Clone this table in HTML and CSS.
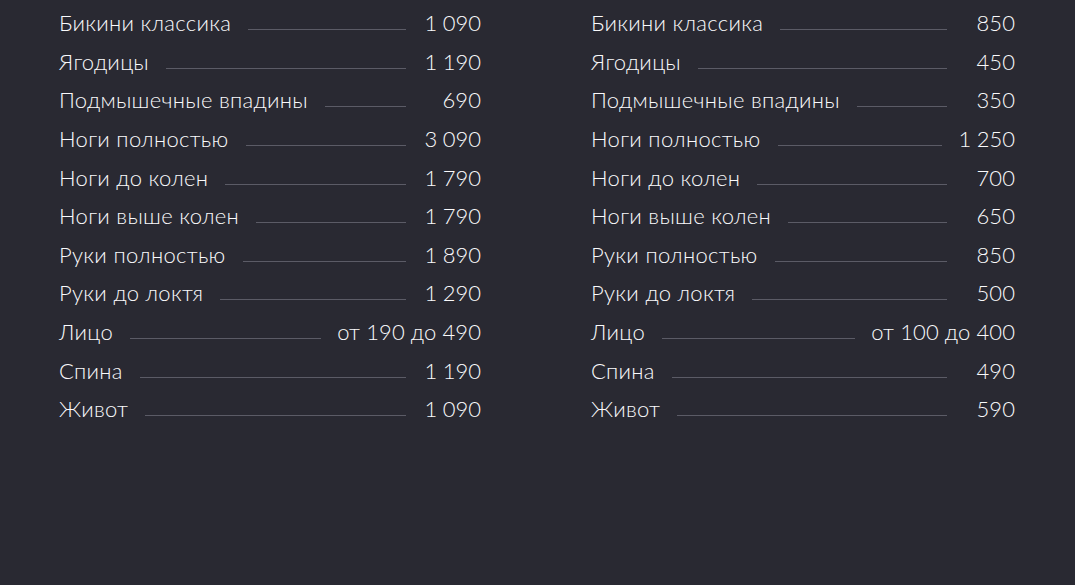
FILE: index.html
```html
<!DOCTYPE html>
<html lang="ru">
<head>
  <meta charset="UTF-8" />
  <meta name="viewport" content="width=device-width, initial-scale=1" />
  <title>Цены на эпиляцию</title>
  <link rel="stylesheet" href="styles.css">
</head>
<body>
  <div class="prices">
    <ul class="price-list price-list--left">
      <li class="price-row"><span class="name">Бикини классика</span><span class="dots"></span><span class="cost">1&#8239;090</span></li>
      <li class="price-row"><span class="name">Ягодицы</span><span class="dots"></span><span class="cost">1&#8239;190</span></li>
      <li class="price-row"><span class="name">Подмышечные впадины</span><span class="dots"></span><span class="cost">690</span></li>
      <li class="price-row"><span class="name">Ноги полностью</span><span class="dots"></span><span class="cost">3&#8239;090</span></li>
      <li class="price-row"><span class="name">Ноги до колен</span><span class="dots"></span><span class="cost">1&#8239;790</span></li>
      <li class="price-row"><span class="name">Ноги выше колен</span><span class="dots"></span><span class="cost">1&#8239;790</span></li>
      <li class="price-row"><span class="name">Руки полностью</span><span class="dots"></span><span class="cost">1&#8239;890</span></li>
      <li class="price-row"><span class="name">Руки до локтя</span><span class="dots"></span><span class="cost">1&#8239;290</span></li>
      <li class="price-row"><span class="name">Лицо</span><span class="dots"></span><span class="cost">от 190 до 490</span></li>
      <li class="price-row"><span class="name">Спина</span><span class="dots"></span><span class="cost">1&#8239;190</span></li>
      <li class="price-row"><span class="name">Живот</span><span class="dots"></span><span class="cost">1&#8239;090</span></li>
    </ul>

    <ul class="price-list price-list--right">
      <li class="price-row"><span class="name">Бикини классика</span><span class="dots"></span><span class="cost">850</span></li>
      <li class="price-row"><span class="name">Ягодицы</span><span class="dots"></span><span class="cost">450</span></li>
      <li class="price-row"><span class="name">Подмышечные впадины</span><span class="dots"></span><span class="cost">350</span></li>
      <li class="price-row"><span class="name">Ноги полностью</span><span class="dots"></span><span class="cost">1&#8239;250</span></li>
      <li class="price-row"><span class="name">Ноги до колен</span><span class="dots"></span><span class="cost">700</span></li>
      <li class="price-row"><span class="name">Ноги выше колен</span><span class="dots"></span><span class="cost">650</span></li>
      <li class="price-row"><span class="name">Руки полностью</span><span class="dots"></span><span class="cost">850</span></li>
      <li class="price-row"><span class="name">Руки до локтя</span><span class="dots"></span><span class="cost">500</span></li>
      <li class="price-row"><span class="name">Лицо</span><span class="dots"></span><span class="cost">от 100 до 400</span></li>
      <li class="price-row"><span class="name">Спина</span><span class="dots"></span><span class="cost">490</span></li>
      <li class="price-row"><span class="name">Живот</span><span class="dots"></span><span class="cost">590</span></li>
    </ul>
  </div>
</body>
</html>
```

FILE: styles.css
```css
* { margin: 0; padding: 0; box-sizing: border-box; }
body, html {
  height: 100%;
  background: #292932;
  font-family: 'Lato', 'Open Sans', sans-serif;
  color: #fafafc;
}
.prices {
  display: grid;
  grid-template-columns: 422px 424px;
  gap: 110px;
  padding: 4px 0 0 59px;
}
.price-list {
  list-style: none;
}
.price-row {
  display: flex;
  align-items: baseline;
  height: 38.65px;
  font-size: 22px;
  font-weight: 300;
  line-height: 38.65px;
}
.name {
  white-space: nowrap;
  letter-spacing: 0.3px;
}
.dots {
  flex: 1;
  margin: 0 16px 0 17px;
  border-bottom: 1px solid #5b5b66;
  position: relative;
  top: -1px;
}
.cost {
  white-space: nowrap;
  text-align: right;
  letter-spacing: 0.1px;
}
.price-list--left .cost { min-width: 59px; }
.price-list--right .cost { min-width: 52px; }
```
